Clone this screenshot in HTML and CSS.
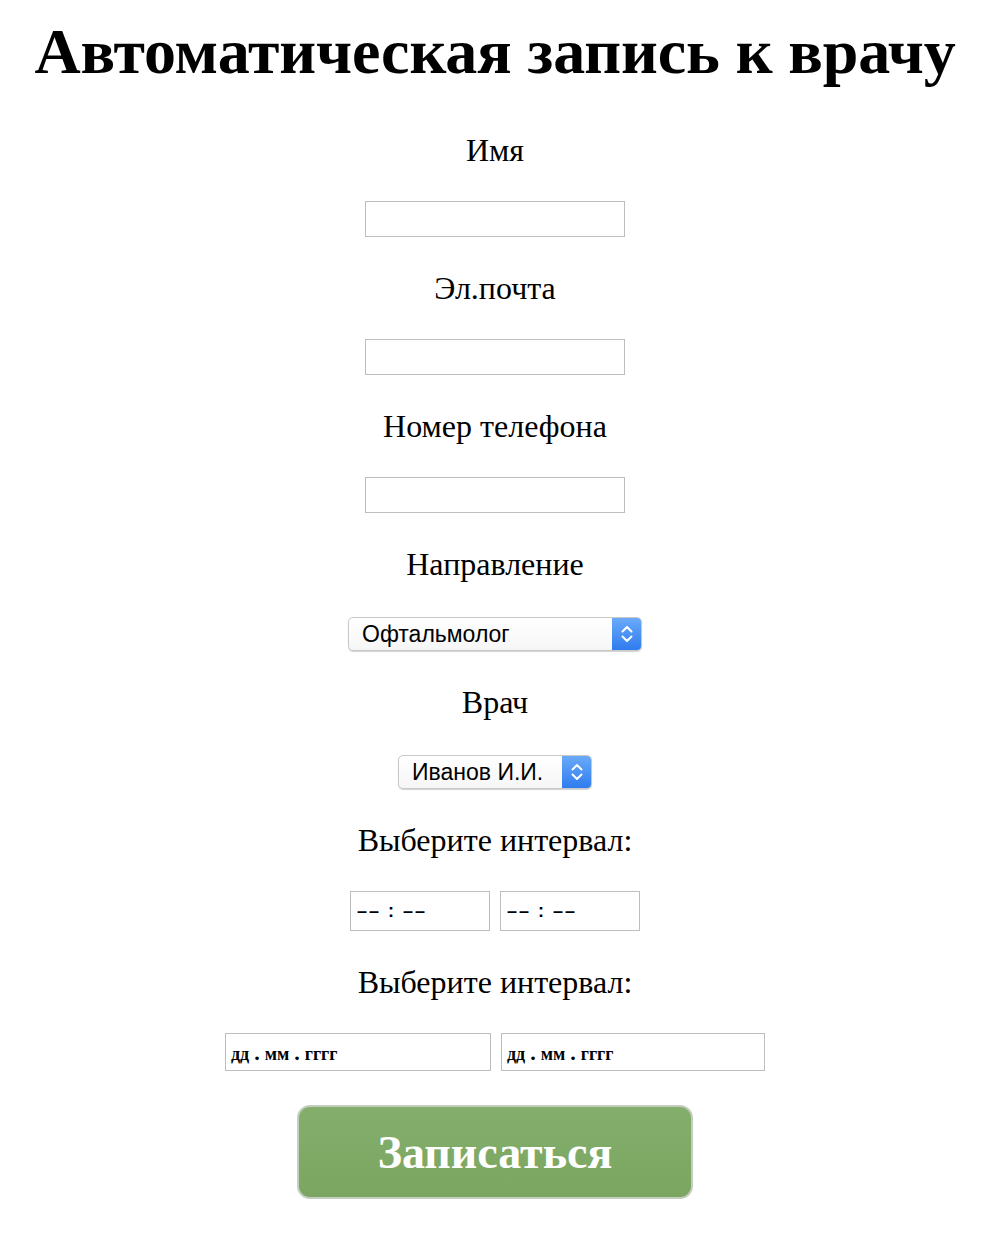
FILE: index.html
```html
<!DOCTYPE html>
<html lang="ru">
<head>
<meta charset="utf-8">
<title>Автоматическая запись к врачу</title>
<link rel="stylesheet" href="styles.css">
</head>
<body>
<h1 class="title">Автоматическая запись к врачу</h1>
<form class="form">
  <label class="label">Имя</label>
  <div class="text-input"></div>
  <label class="label">Эл.почта</label>
  <div class="text-input"></div>
  <label class="label">Номер телефона</label>
  <div class="text-input"></div>
  <label class="label">Направление</label>
  <div class="select select-wide"><span class="select-text">Офтальмолог</span><span class="select-arrow"><svg width="14" height="22" viewBox="0 0 14 22"><path d="M2.5 8.5 L7 4 L11.5 8.5" fill="none" stroke="#fff" stroke-width="2" stroke-linecap="round" stroke-linejoin="round"/><path d="M2.5 13.5 L7 18 L11.5 13.5" fill="none" stroke="#fff" stroke-width="2" stroke-linecap="round" stroke-linejoin="round"/></svg></span></div>
  <label class="label">Врач</label>
  <div class="select select-narrow"><span class="select-text">Иванов И.И.</span><span class="select-arrow"><svg width="14" height="22" viewBox="0 0 14 22"><path d="M2.5 8.5 L7 4 L11.5 8.5" fill="none" stroke="#fff" stroke-width="2" stroke-linecap="round" stroke-linejoin="round"/><path d="M2.5 13.5 L7 18 L11.5 13.5" fill="none" stroke="#fff" stroke-width="2" stroke-linecap="round" stroke-linejoin="round"/></svg></span></div>
  <label class="label">Выберите интервал:</label>
  <div class="pair">
    <div class="time-input">–– : ––</div>
    <div class="time-input">–– : ––</div>
  </div>
  <label class="label">Выберите интервал:</label>
  <div class="pair">
    <div class="date-input">дд<span class="dot">.</span>мм<span class="dot">.</span>гггг</div>
    <div class="date-input">дд<span class="dot">.</span>мм<span class="dot">.</span>гггг</div>
  </div>
  <button type="button" class="submit">Записаться</button>
</form>
</body>
</html>
```

FILE: styles.css
```css
html, body {
  margin: 0;
  padding: 0;
  background: #fff;
}
body {
  padding-right: 16px;
  font-family: "Liberation Serif", "Times New Roman", serif;
  color: #000;
}
.title {
  margin: 0;
  padding-top: 16px;
  font-size: 64px;
  line-height: 72px;
  font-weight: bold;
  text-align: center;
  letter-spacing: -0.1px;
}
.form {
  display: flex;
  flex-direction: column;
  align-items: center;
  gap: 33px;
  margin-top: 44px;
}
.label {
  font-size: 32px;
  line-height: 36px;
}
.text-input {
  width: 258px;
  height: 34px;
  border: 1px solid #bdbdbd;
  background: #fff;
}
.select {
  display: flex;
  align-items: center;
  justify-content: space-between;
  height: 32px;
  margin-top: 2px;
  border: 1px solid #c8c8c8;
  border-radius: 5px;
  background: linear-gradient(#ffffff, #f6f6f6);
  box-shadow: 0 1px 1px rgba(0,0,0,0.18);
  overflow: hidden;
  font-family: "Liberation Sans", Arial, sans-serif;
  font-size: 23px;
}
.select-wide { width: 292px; }
.select-narrow { width: 192px; }
.select-text {
  padding-left: 13px;
}
.select-arrow {
  display: flex;
  align-items: center;
  justify-content: center;
  width: 29px;
  height: 100%;
  background: linear-gradient(#6aaaf8, #2f7cf0);
}
.pair {
  display: flex;
  gap: 10px;
}
.time-input {
  box-sizing: border-box;
  width: 140px;
  height: 40px;
  padding-left: 6px;
  border: 1px solid #bdbdbd;
  font-family: "Liberation Sans", Arial, sans-serif;
  font-weight: bold;
  font-size: 18px;
  line-height: 38px;
  letter-spacing: 2px;
  white-space: pre;
}
.date-input {
  box-sizing: border-box;
  width: 266px;
  height: 38px;
  padding-left: 5px;
  border: 1px solid #bdbdbd;
  font-size: 18px;
  font-weight: bold;
  line-height: 38px;
}
.date-input + .date-input { width: 264px; }
.dot {
  display: inline-block;
  margin: 0 5px;
  font-size: 22px;
}
.submit {
  width: 396px;
  height: 94px;
  margin-top: 1px;
  border: 2px solid #c5cdbf;
  border-radius: 13px;
  background: linear-gradient(#84ae6c, #7aa661);
  color: #fff;
  font-family: "Liberation Serif", "Times New Roman", serif;
  font-weight: bold;
  font-size: 46px;
  padding: 0;
}
```
